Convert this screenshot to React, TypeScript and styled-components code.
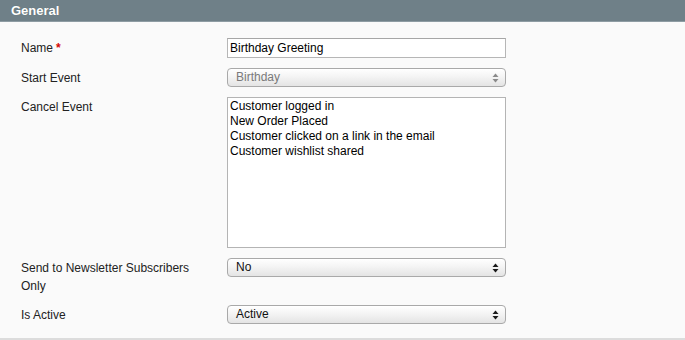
import React from 'react';
import styled, { createGlobalStyle } from 'styled-components';

const GlobalStyle = createGlobalStyle`
  html, body {
    margin: 0;
    padding: 0;
    background: #fafafa;
  }
  body {
    font-family: "Liberation Sans", Arial, sans-serif;
    font-size: 12px;
    color: #222;
  }
`;

const Panel = styled.div`
  width: 685px;
  height: 340px;
  box-sizing: border-box;
  background: #fafafa;
  border-bottom: 2px solid #dcdcdc;
  display: flex;
  flex-direction: column;
`;

const Header = styled.div`
  height: 22px;
  box-sizing: border-box;
  background: #6f8088;
  border-bottom: 1px solid #8e9ca3;
  color: #fff;
  font-weight: bold;
  font-size: 13px;
  line-height: 21px;
  padding-left: 11px;
  text-shadow: 0 0 1px rgba(0, 0, 0, 0.2);
`;

const Form = styled.div`
  display: grid;
  grid-template-columns: 206px 279px;
  row-gap: 10px;
  padding: 16px 0 0 21px;
  align-items: start;
`;

const Label = styled.div`
  line-height: 18px;
  padding-top: 1px;
  color: #222;
  width: 180px;
`;

const Required = styled.span`
  color: #d40707;
  font-weight: bold;
  margin-left: 3px;
`;

const TextInput = styled.div`
  height: 20px;
  box-sizing: border-box;
  background: #fff;
  border: 1px solid #b6b6b6;
  border-top-color: #a6a6a6;
  padding-left: 2px;
  line-height: 18px;
  color: #000;
`;

const Select = styled.div<{ $disabled?: boolean }>`
  height: 19px;
  box-sizing: border-box;
  border: 1px solid #a9a9a9;
  border-radius: 4px;
  background: linear-gradient(#ffffff 0%, #f4f4f4 45%, #e4e4e4 100%);
  box-shadow: inset 0 1px 0 #fff;
  display: flex;
  align-items: center;
  justify-content: space-between;
  padding: 0 6px 0 8px;
  color: ${p => (p.$disabled ? '#7a7a7a' : '#111')};
  line-height: 17px;
`;

const ListBox = styled.div`
  height: 151px;
  box-sizing: border-box;
  background: #fff;
  border: 1px solid #b4b4b4;
  padding: 1px 0 0 2px;
  color: #000;
`;

const Option = styled.div`
  line-height: 15px;
`;

const Arrows: React.FC<{ faded?: boolean }> = ({ faded }) => (
  <svg width="7" height="10" viewBox="0 0 7 10">
    <path d="M3.5 0.5 L6.5 4 H0.5 Z" fill={faded ? '#8a8a8a' : '#1a1a1a'} />
    <path d="M3.5 9.5 L6.5 6 H0.5 Z" fill={faded ? '#8a8a8a' : '#1a1a1a'} />
  </svg>
);

const App: React.FC = () => {
  return (
    <>
      <GlobalStyle />
      <Panel>
        <Header>General</Header>
        <Form>
          <Label>
            Name<Required>*</Required>
          </Label>
          <TextInput>Birthday Greeting</TextInput>

          <Label>Start Event</Label>
          <Select $disabled>
            <span>Birthday</span>
            <Arrows faded />
          </Select>

          <Label>Cancel Event</Label>
          <ListBox>
            <Option>Customer logged in</Option>
            <Option>New Order Placed</Option>
            <Option>Customer clicked on a link in the email</Option>
            <Option>Customer wishlist shared</Option>
          </ListBox>

          <Label>Send to Newsletter Subscribers Only</Label>
          <Select>
            <span>No</span>
            <Arrows />
          </Select>

          <Label>Is Active</Label>
          <Select>
            <span>Active</span>
            <Arrows />
          </Select>
        </Form>
      </Panel>
    </>
  );
};

export default App;
